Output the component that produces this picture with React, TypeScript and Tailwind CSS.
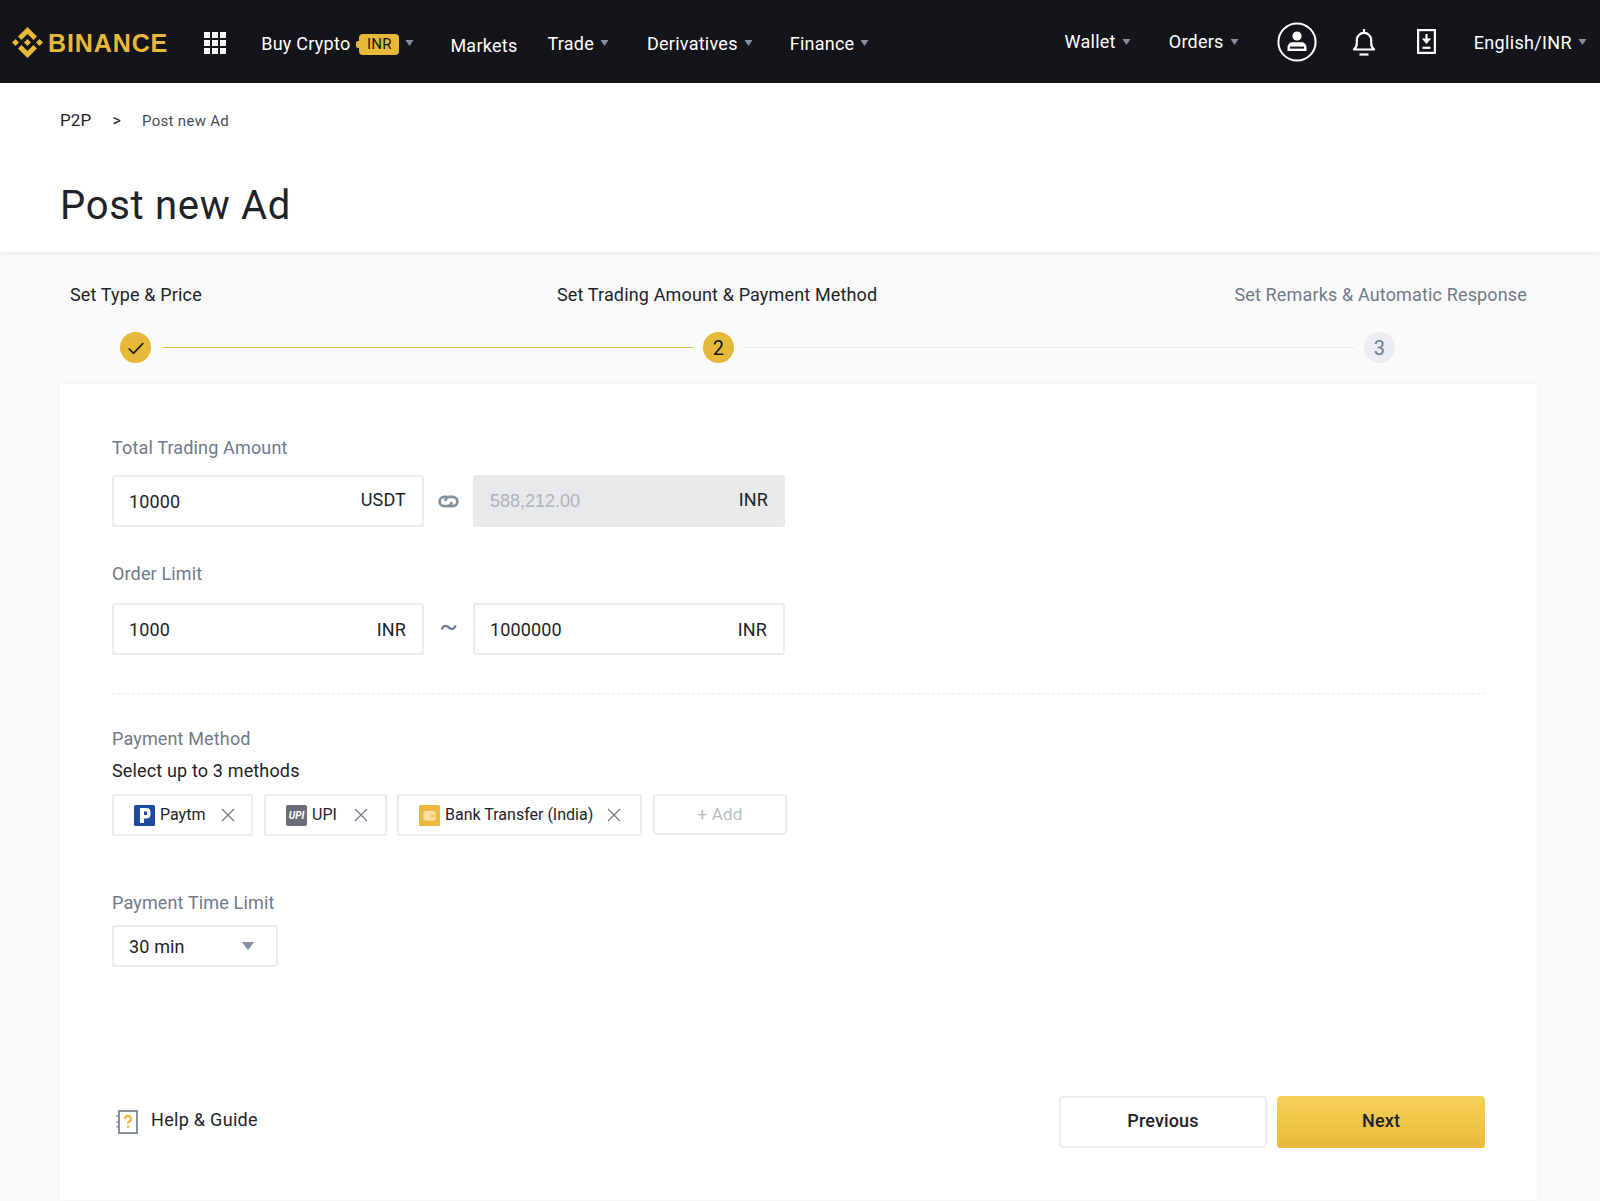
import React from 'react';

const font = { fontFamily: 'Roboto, "Noto Sans", sans-serif' };

function Caret({ className = '' }: { className?: string }) {
  return (
    <svg viewBox="0 0 8 6" className={`w-[9px] h-[6px] shrink-0 ${className}`}>
      <path d="M0 0h8L4 6z" fill="#848e9c" />
    </svg>
  );
}

function BinanceLogo() {
  return (
    <div className="flex items-center">
      <svg viewBox="0 0 24 24" className="w-[31px] h-[31px] mt-[1px]" fill="#e6b93a">
        <path d="M16.624 13.9202l2.7175 2.7154-7.353 7.353-7.353-7.352 2.7175-2.7164 4.6355 4.6595 4.6356-4.6595zm4.6366-4.6366L24 12l-2.7154 2.7164L18.5682 12l2.6924-2.7164zm-9.272.001l2.7163 2.6914-2.7164 2.7174v-.001L9.2721 12l2.7164-2.7154zm-9.2722-.001L5.4088 12l-2.6914 2.6924L0 12l2.7164-2.7164zM11.9885.0115l7.353 7.329-2.7174 2.7154-4.6356-4.6356-4.6355 4.6595-2.7174-2.7154 7.353-7.353z" />
      </svg>
      <span className="ml-[5px] mt-[4px] text-[25px] leading-none font-bold tracking-[0.9px] text-[#e6b93a] font-['Liberation_Sans',sans-serif]">BINANCE</span>
    </div>
  );
}

function GridIcon() {
  return (
    <div className="grid grid-cols-3 gap-[2px] w-[22px] h-[22px] ml-[36px] mt-[2px]">
      {Array.from({ length: 9 }).map((_, i) => (
        <div key={i} className="bg-white" />
      ))}
    </div>
  );
}

function Navbar() {
  return (
    <div className="h-[83px] bg-[#14151a] flex items-center text-white text-[18px] tracking-[0.25px] pl-[12px] shrink-0">
      <BinanceLogo />
      <GridIcon />
      <span className="ml-[35px] mt-[4px]">Buy Crypto</span>
      <span className="ml-[6px] mt-[5px] w-[3px] h-[7px] rounded-l-[2px] bg-[#e6b93a]" />
      <span className="mt-[5px] w-[40px] h-[21px] rounded-[4px] bg-[#e6b93a] text-[#14151a] text-[15px] leading-[21px] text-center">INR</span>
      <Caret className="ml-[6px] mt-[3px]" />
      <span className="ml-[36px] mt-[8px]">Markets</span>
      <span className="ml-[30px] mt-[4px]">Trade</span>
      <Caret className="ml-[6px] mt-[3px]" />
      <span className="ml-[38px] mt-[4px]">Derivatives</span>
      <Caret className="ml-[6px] mt-[3px]" />
      <span className="ml-[37px] mt-[4px]">Finance</span>
      <Caret className="ml-[6px] mt-[3px]" />
      <div className="flex-1" />
      <span className="mb-[1px]">Wallet</span>
      <Caret className="ml-[6px]" />
      <span className="ml-[38px] mb-[1px]">Orders</span>
      <Caret className="ml-[6px]" />
      <svg viewBox="0 0 40 40" className="ml-[38px] w-[40px] h-[40px]" fill="none">
        <circle cx="20" cy="20" r="18.6" stroke="white" strokeWidth="2" />
        <circle cx="20" cy="14" r="4.6" fill="white" />
        <path d="M10.5 29v-3.5c0-3.2 2.2-5.2 5.2-5.2h8.6c3 0 5.2 2 5.2 5.2V29z" fill="white" />
        <rect x="13" y="24.6" width="14" height="2" fill="#14151a" />
      </svg>
      <svg viewBox="0 0 24 28" className="ml-[35px] w-[24px] h-[28px]" fill="none" stroke="white" strokeWidth="2.2">
        <path d="M12 1v3.5M2 21.5c2.2-1.6 2.8-3.5 2.8-6.5v-3a7.2 7.2 0 0 1 14.4 0v3c0 3 .6 4.9 2.8 6.5z" strokeLinejoin="round" />
        <path d="M7.5 26.5h9" />
      </svg>
      <svg viewBox="0 0 19 25" className="ml-[41px] w-[19px] h-[25px]" fill="none" stroke="white" strokeWidth="2.2">
        <rect x="1.1" y="1.1" width="16.8" height="22.8" />
        <path d="M9.5 5v5" />
        <path d="M4.8 9.5h9.4L9.5 15z" fill="white" stroke="none" />
        <path d="M5.5 18.8h8" />
      </svg>
      <span className="ml-[38px] mt-[2px] tracking-[0.35px]">English/INR</span>
      <Caret className="ml-[6px] mr-[13px]" />
    </div>
  );
}

function Stepper() {
  return (
    <div className="h-[132px] px-[70px] pt-[31px] shrink-0 -mr-px">
      <div className="flex justify-between text-[18px] leading-[24px] text-[#1e2329] pr-[4px]">
        <span>Set Type &amp; Price</span>
        <span className="-ml-[2px]">Set Trading Amount &amp; Payment Method</span>
        <span className="text-[#707a8a]">Set Remarks &amp; Automatic Response</span>
      </div>
      <div className="flex items-center mt-[25px] ml-[50px]">
        <div className="w-[31px] h-[31px] rounded-full bg-[#e6b93a] flex items-center justify-center">
          <svg viewBox="0 0 16 16" className="w-[18px] h-[18px]" fill="none" stroke="#14151a" strokeWidth="1.4">
            <path d="M1.5 8.5l4.3 4.3L14.5 3.5" />
          </svg>
        </div>
        <div className="ml-[12px] w-[530px] h-[1.5px] bg-[#e6b93a]" />
        <div className="ml-[10px] w-[31px] h-[31px] rounded-full bg-[#e6b93a] flex items-center justify-center text-[20px] text-[#14151a]">2</div>
        <div className="ml-[11px] w-[610px] h-[1.5px] bg-[#eaecef]" />
        <div className="ml-[9px] w-[31px] h-[31px] rounded-full bg-[#eaecef] flex items-center justify-center text-[20px] text-[#707a8a]">3</div>
      </div>
    </div>
  );
}

function AmountInput({ value, unit, disabled, raised }: { value: string; unit: string; disabled?: boolean; raised?: boolean }) {
  return (
    <div
      className={`w-[312px] h-[52px] rounded-[3px] flex items-center justify-between ${
        disabled ? 'pl-[17px] pr-[17px] bg-[#e8e9eb] text-[#aeb4bc]' : 'pl-[15px] pr-[16px] border-2 border-[#eaecef] bg-white text-[#1e2329]'
      }`}
    >
      <span className={disabled ? "text-[18px] tracking-normal font-['Liberation_Sans',sans-serif]" : 'text-[18px]'}>{value}</span>
      <span className={`text-[18px] text-[#1e2329] ${raised ? 'mb-[4px]' : ''}`}>{unit}</span>
    </div>
  );
}

function Chip({ icon, label, width, closeGap }: { icon: React.ReactNode; label: string; width: string; closeGap: string }) {
  return (
    <div className={`${width} h-[42px] border-2 border-[#eaecef] rounded-[2px] flex items-center pl-[20px] text-[16px] tracking-normal text-[#1e2329]`}>
      {icon}
      <span className="ml-[5px]">{label}</span>
      <div className="flex-1" />
      <svg viewBox="0 0 14 14" className={`w-[14px] h-[14px] mb-[1px] ${closeGap}`} fill="none" stroke="#707a8a" strokeWidth="1.2">
        <path d="M1 1l12 12M13 1L1 13" />
      </svg>
    </div>
  );
}

function PaytmIcon() {
  return (
    <svg viewBox="0 0 21 21" className="w-[21px] h-[21px] shrink-0">
      <rect width="21" height="21" rx="1.5" fill="#1d4aa0" />
      <path d="M6 3h6.5a4 4 0 0 1 4 4v2.5a4 4 0 0 1-4 4H10V18H6z" fill="white" />
      <rect x="10" y="6.5" width="3" height="3.5" fill="#1d4aa0" />
    </svg>
  );
}

function UpiIcon() {
  return (
    <div className="w-[21px] h-[21px] rounded-[2px] bg-[#6b6e76] flex items-center justify-center text-[10px] font-bold italic text-white shrink-0">UPI</div>
  );
}

function BankIcon() {
  return (
    <svg viewBox="0 0 21 21" className="w-[21px] h-[21px] shrink-0">
      <rect width="21" height="21" rx="1.5" fill="#ecb93c" />
      <rect x="4.5" y="6" width="12" height="9.5" rx="1" fill="#f7dfa0" />
      <rect x="12" y="10" width="3" height="2" fill="#ecb93c" />
    </svg>
  );
}

function Card() {
  return (
    <div className="mx-[60px] w-[1477px] h-[816px] bg-white pl-[52px] pr-[52px] pt-[52px] shadow-[0_0_8px_rgba(0,0,0,0.03)]">
      <div className="text-[18px] leading-[24px] text-[#707a8a]">Total Trading Amount</div>
      <div className="flex items-center mt-[15px]">
        <AmountInput value="10000" unit="USDT" raised />
        <svg viewBox="0 0 24 24" className="mx-[12px] w-[25px] h-[25px]" fill="none" stroke="#848e9c" strokeWidth="2.6" strokeLinecap="round">
          <path d="M10 7.5H8a4.5 4.5 0 0 0 0 9h3c2 0 3.3-1.2 3.8-3" />
          <path d="M14 16.5h2a4.5 4.5 0 0 0 0-9h-3c-2 0-3.3 1.2-3.8 3" />
        </svg>
        <AmountInput value="588,212.00" unit="INR" disabled raised />
      </div>
      <div className="text-[18px] leading-[24px] text-[#707a8a] mt-[35px]">Order Limit</div>
      <div className="flex items-center mt-[17px]">
        <AmountInput value="1000" unit="INR" />
        <span className="w-[49px] text-center text-[28px] leading-none text-[#707a8a] mb-[6px]">~</span>
        <AmountInput value="1000000" unit="INR" />
      </div>
      <div className="mt-[38px] border-t border-dashed border-[#e6e8ea]" />
      <div className="text-[18px] leading-[24px] text-[#707a8a] mt-[33px]">Payment Method</div>
      <div className="text-[18px] leading-[24px] text-[#1e2329] mt-[8px]">Select up to 3 methods</div>
      <div className="flex items-start gap-[11px] mt-[11px]">
        <Chip icon={<PaytmIcon />} label="Paytm" width="w-[141px]" closeGap="mr-[16px]" />
        <Chip icon={<UpiIcon />} label="UPI" width="w-[123px]" closeGap="mr-[17px]" />
        <div className="-ml-px">
          <Chip icon={<BankIcon />} label="Bank Transfer (India)" width="w-[245px]" closeGap="mr-[19px]" />
        </div>
        <div className="w-[134px] h-[41px] border-2 border-[#eaecef] rounded-[3px] flex items-center justify-center text-[17px] text-[#b7bdc6]">+ Add</div>
      </div>
      <div className="text-[18px] leading-[24px] text-[#707a8a] mt-[55px]">Payment Time Limit</div>
      <div className="w-[166px] h-[42px] mt-[10px] border-2 border-[#eaecef] rounded-[3px] flex items-center justify-between pl-[15px] pr-[22px] text-[18px] text-[#1e2329]">
        <span>30 min</span>
        <svg viewBox="0 0 12 8" className="w-[12px] h-[8px]">
          <path d="M0 0h12L6 8z" fill="#848e9c" />
        </svg>
      </div>
      <div className="flex items-center mt-[129px]">
        <svg viewBox="0 0 22 24" className="ml-[4px] w-[22px] h-[24px] mb-[1px]" fill="none">
          <rect x="3" y="1" width="18" height="22" stroke="#848e9c" strokeWidth="2" />
          <path d="M0.5 6h3M0.5 12h3M0.5 17h3" stroke="#848e9c" strokeWidth="1.6" />
          <path d="M9 9a3 3 0 1 1 3.6 2.9c-.5.2-.6.6-.6 1.6" stroke="#f0b93a" strokeWidth="2.2" />
          <rect x="11" y="15.5" width="2.2" height="2.4" fill="#f0b93a" />
        </svg>
        <span className="ml-[13px] text-[18px] tracking-[0.3px] text-[#1e2329] mb-[5px]">Help &amp; Guide</span>
        <div className="flex-1" />
        <button className="w-[208px] h-[52px] pb-[3px] border-2 border-[#eaecef] rounded-[4px] bg-white text-[18px] font-medium text-[#1e2329]">Previous</button>
        <button className="ml-[10px] w-[208px] h-[52px] pb-[3px] rounded-[4px] bg-gradient-to-b from-[#f4d256] to-[#e8b93a] text-[18px] font-medium text-[#1e2329]">Next</button>
      </div>
    </div>
  );
}

export default function App() {
  return (
    <div className="w-[1600px] h-[1201px] overflow-hidden bg-[#fafafa] flex flex-col tracking-[0.15px]" style={font}>
      <Navbar />
      <div className="h-[169px] bg-white shadow-[0_2px_4px_rgba(0,0,0,0.06)] pl-[60px] shrink-0">
        <div className="flex items-center pt-[26px] h-[50px] text-[#1e2329]">
          <span className="text-[17px]">P2P</span>
          <span className="ml-[21px] text-[16px]">&gt;</span>
          <span className="ml-[21px] text-[15px] tracking-[0.3px] text-[#474d57]">Post new Ad</span>
        </div>
        <h1 className="mt-[48px] text-[40px] leading-[50px] tracking-[0.7px] text-[#1e2329]">Post new Ad</h1>
      </div>
      <Stepper />
      <Card />
    </div>
  );
}
